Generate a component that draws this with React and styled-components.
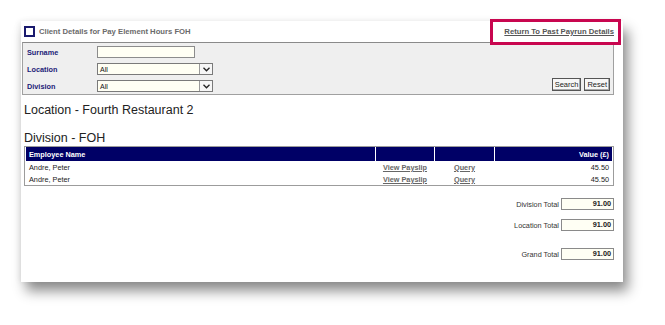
import React from "react";
import styled, { createGlobalStyle } from "styled-components";

const GlobalStyle = createGlobalStyle`
  html, body {
    margin: 0;
    padding: 0;
    background: #ffffff;
  }
  body {
    font-family: "Liberation Sans", Arial, sans-serif;
  }
`;

const Page = styled.div`
  width: 665px;
  height: 325px;
  padding: 21px 0 0 21px;
  box-sizing: border-box;
  overflow: hidden;
`;

const Panel = styled.div`
  position: relative;
  width: 602px;
  height: 261px;
  box-sizing: border-box;
  padding: 0 9px 0 1px;
  background: #ffffff;
  box-shadow: 5px 9px 12px rgba(0, 0, 0, 0.45), -2px 0 6px rgba(0, 0, 0, 0.06);
`;

const TitleBar = styled.div`
  display: flex;
  align-items: center;
  justify-content: space-between;
  height: 21px;
  padding: 0 0 0 2px;
`;

const TitleLeft = styled.div`
  display: flex;
  align-items: center;
  gap: 4px;
`;

const CheckBox = styled.span`
  width: 7px;
  height: 7px;
  border: 2px solid #1a1a6e;
  display: inline-block;
`;

const Title = styled.span`
  font-size: 7.7px;
  font-weight: bold;
  color: #6b6b6b;
`;

const BackLink = styled.a`
  font-size: 7.7px;
  font-weight: bold;
  color: #555555;
  text-decoration: underline;
`;

const Highlight = styled.div`
  position: absolute;
  left: 469px;
  top: -2px;
  width: 131px;
  height: 26px;
  box-sizing: border-box;
  border: 3px solid #c8064f;
`;

const FilterBox = styled.div`
  display: flex;
  justify-content: space-between;
  align-items: flex-end;
  height: 53px;
  box-sizing: border-box;
  padding: 3px 3px 2px 4px;
  background: #efefef;
  border: 1px solid #a0a0a0;
  border-top-color: #8a8a8a;
`;

const FilterFields = styled.div`
  display: grid;
  grid-template-columns: 70px auto;
  row-gap: 5px;
  align-items: center;
`;

const Label = styled.label`
  font-size: 7.3px;
  color: #1c1c78;
  font-weight: bold;
`;

const TextInput = styled.div`
  width: 98px;
  height: 12px;
  box-sizing: border-box;
  background: #fffff4;
  border: 1px solid #8c8c8c;
`;

const Select = styled.div`
  display: flex;
  align-items: center;
  justify-content: space-between;
  width: 116px;
  height: 12px;
  box-sizing: border-box;
  background: #fffff4;
  border: 1px solid #7a7a7a;
  padding-left: 2px;
  font-size: 7px;
  color: #111;
`;

const Arrow = styled.span`
  display: flex;
  align-items: center;
  justify-content: center;
  width: 12px;
  height: 10px;
  border-left: 1px solid #9a9a9a;
  background: #f6f6f6;
`;

const Buttons = styled.div`
  display: flex;
  gap: 3px;
  margin-bottom: 1px;
`;

const Button = styled.button`
  font-family: "Liberation Sans", Arial, sans-serif;
  font-size: 7.5px;
  height: 13px;
  padding: 0 2px;
  line-height: 11px;
  background: #f7f7f7;
  border: 1px solid #555;
  box-shadow: inset -1px -1px 0 #aaa;
  color: #222;
`;

const Heading = styled.div`
  font-size: 12.5px;
  color: #222;
  margin: ${(p) => p.$top}px 0 0 2px;
  line-height: 14px;
`;

const Table = styled.table`
  margin: 1px 0 0 2px;
  width: 590px;
  border: 1px solid #9c9c9c;
  border-collapse: separate;
  border-spacing: 1px 0;
  font-size: 7.3px;
`;

const HeadCell = styled.th`
  background: #000066;
  color: #ffffff;
  height: 14px;
  padding: 0 3px;
  text-align: ${(p) => p.$align || "left"};
  font-weight: bold;
  width: ${(p) => p.$w || "auto"};
`;

const Cell = styled.td`
  height: 12px;
  padding: 0 3px;
  color: #222;
  text-align: ${(p) => p.$align || "left"};
`;

const CellLink = styled.a`
  color: #666;
  font-weight: bold;
  text-decoration: underline;
`;

const Totals = styled.div`
  display: flex;
  flex-direction: column;
  align-items: flex-end;
  margin-top: 12px;
`;

const TotalRow = styled.div`
  display: flex;
  align-items: center;
  gap: 2px;
  margin-top: ${(p) => p.$top}px;
  font-size: 7.3px;
  color: #333;
`;

const TotalBox = styled.div`
  width: 53px;
  height: 12px;
  box-sizing: border-box;
  background: #fffff4;
  border: 1px solid #8a8a8a;
  text-align: right;
  padding-right: 2px;
  font-weight: bold;
  line-height: 10px;
  color: #222;
`;

const rows = [
  { name: "Andre, Peter", value: "45.50" },
  { name: "Andre, Peter", value: "45.50" },
];

const totals = [
  { label: "Division Total", top: 0 },
  { label: "Location Total", top: 9 },
  { label: "Grand Total", top: 17 },
];

const SelectArrow = () => (
  <Arrow>
    <svg width="7" height="5" viewBox="0 0 7 5">
      <path d="M0.5 0.8 L3.5 3.8 L6.5 0.8" fill="none" stroke="#222" strokeWidth="1.3" />
    </svg>
  </Arrow>
);

export default function App() {
  return (
    <Page>
      <GlobalStyle />
      <Panel>
        <TitleBar>
          <TitleLeft>
            <CheckBox />
            <Title>Client Details for Pay Element Hours FOH</Title>
          </TitleLeft>
          <BackLink>Return To Past Payrun Details</BackLink>
        </TitleBar>
        <Highlight />
        <FilterBox>
          <FilterFields>
            <Label>Surname</Label>
            <TextInput />
            <Label>Location</Label>
            <Select>
              All
              <SelectArrow />
            </Select>
            <Label>Division</Label>
            <Select>
              All
              <SelectArrow />
            </Select>
          </FilterFields>
          <Buttons>
            <Button>Search</Button>
            <Button>Reset</Button>
          </Buttons>
        </FilterBox>
        <Heading $top={8}>Location - Fourth Restaurant 2</Heading>
        <Heading $top={14}>Division - FOH</Heading>
        <Table>
          <thead>
            <tr>
              <HeadCell>Employee Name</HeadCell>
              <HeadCell $w="52px" />
              <HeadCell $w="53px" />
              <HeadCell $w="111px" $align="right">Value (£)</HeadCell>
            </tr>
          </thead>
          <tbody>
            {rows.map((r, i) => (
              <tr key={i}>
                <Cell>{r.name}</Cell>
                <Cell $align="center"><CellLink>View Payslip</CellLink></Cell>
                <Cell $align="center"><CellLink>Query</CellLink></Cell>
                <Cell $align="right">{r.value}</Cell>
              </tr>
            ))}
          </tbody>
        </Table>
        <Totals>
          {totals.map((t) => (
            <TotalRow key={t.label} $top={t.top}>
              {t.label}
              <TotalBox>91.00</TotalBox>
            </TotalRow>
          ))}
        </Totals>
      </Panel>
    </Page>
  );
}
